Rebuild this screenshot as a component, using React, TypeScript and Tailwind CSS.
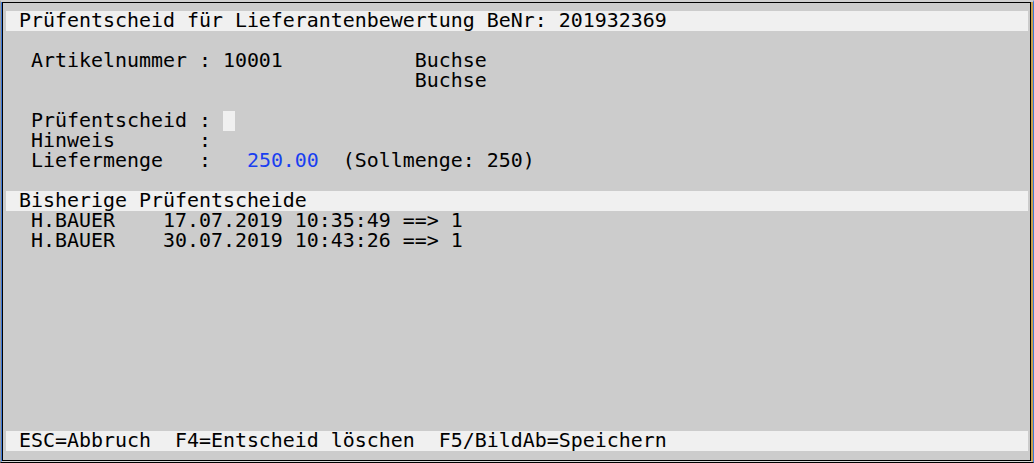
import React from "react";

const Row = ({ children, bar }: { children?: React.ReactNode; bar?: boolean }) => (
  <div className={`h-5 whitespace-pre pl-[1px] ${bar ? "bg-[#f0f0f0]" : ""}`}>{children ?? " "}</div>
);

export default function App() {
  return (
    <div
      className="w-[1034px] h-[463px] overflow-hidden bg-[#cccccc] border-l border-l-[#9a9a9a] border-r border-r-[#3c78d8] border-t-2 border-t-[#cfcfcf] border-b border-b-black"
    >
      <div className="h-full border-l border-l-[#3c78d8] border-r-2 border-r-[#c8a050] border-b border-b-[#d8d8d8]">
        <div
          className="h-full border border-black bg-[#cccccc] pt-[8px] pl-[3px] pr-[2px] text-black text-[19.93px] leading-[20px]"
          style={{ fontFamily: '"DejaVu Sans Mono", "Liberation Mono", monospace' }}
        >
          <Row bar>{" Prüfentscheid für Lieferantenbewertung BeNr: 201932369"}</Row>
          <Row />
          <Row>{"  Artikelnummer : 10001           Buchse"}</Row>
          <Row>{"                                  Buchse"}</Row>
          <Row />
          <Row>
            {"  Prüfentscheid : "}
            <span className="inline-block w-[12px] h-5 align-top bg-[#f0f0f0]" />
          </Row>
          <Row>{"  Hinweis       :"}</Row>
          <Row>
            {"  Liefermenge   :   "}
            <span className="text-[#1a3ff0]">250.00</span>
            {"  (Sollmenge: 250)"}
          </Row>
          <Row />
          <Row bar>{" Bisherige Prüfentscheide"}</Row>
          <Row>{"  H.BAUER    17.07.2019 10:35:49 ==> 1"}</Row>
          <Row>{"  H.BAUER    30.07.2019 10:43:26 ==> 1"}</Row>
          <Row />
          <Row />
          <Row />
          <Row />
          <Row />
          <Row />
          <Row />
          <Row />
          <Row />
          <Row bar>{" ESC=Abbruch  F4=Entscheid löschen  F5/BildAb=Speichern"}</Row>
        </div>
      </div>
    </div>
  );
}
